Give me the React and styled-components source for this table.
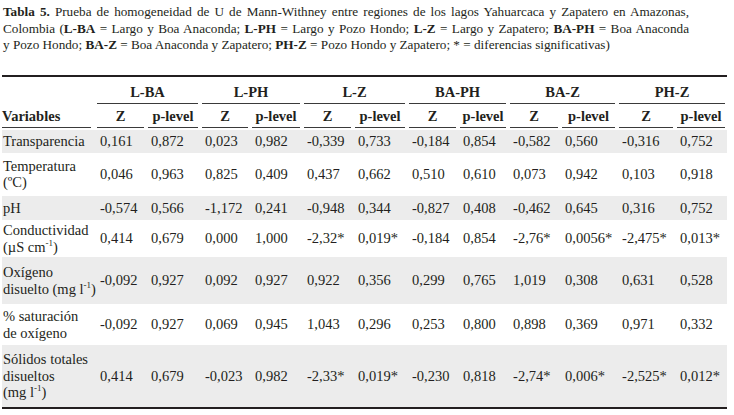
import React from "react"
import styled, { createGlobalStyle } from "styled-components"

const GlobalStyle = createGlobalStyle`
  html, body {
    margin: 0;
    padding: 0;
    background: #ffffff;
  }
  body {
    font-family: "Liberation Serif", "Times New Roman", serif;
    color: #231f20;
  }
`

const Page = styled.div`
  width: 734px;
  height: 415px;
  padding: 4px 5px 0 2px;
  box-sizing: border-box;
  overflow: hidden;
`

const Caption = styled.div`
  width: 686px;
  margin-left: 1px;
  font-size: 13.2px;
  line-height: 16.5px;
  b {
    font-weight: 700;
  }
`

const CaptionLine = styled.span`
  display: block;
  white-space: nowrap;
  text-align: left;
  text-align-last: ${(p) => (p.$justify ? "justify" : "left")};
  ${(p) => p.$justify && "white-space: normal;"}
`

const Table = styled.table`
  margin-top: 21px;
  width: 725px;
  table-layout: fixed;
  border-collapse: collapse;
  border-top: 2px solid #231f20;
  border-bottom: 2px solid #231f20;
  font-family: "Liberation Serif", "Times New Roman", serif;
  font-size: 14.5px;
  line-height: 16.5px;
  color: #231f20;
`

const Group = styled.th`
  padding: 7px 2px 0;
  height: 27px;
  box-sizing: border-box;
  font-weight: 700;
  text-align: center;
  vertical-align: top;
`

const Rule = styled.div`
  border-bottom: 1px solid #3a3a3a;
  padding-bottom: 3px;
`

const Head = styled.th`
  padding: 0 ${(p) => (p.$left ? 4 : 2)}px 2px ${(p) => (p.$left ? 0 : 2)}px;
  height: 26px;
  box-sizing: border-box;
  font-weight: 700;
  text-align: ${(p) => (p.$left ? "left" : "center")};
  vertical-align: bottom;
`

const Row = styled.tr`
  background: ${(p) => (p.$shade ? "#ececec" : "#ffffff")};
`

const Cell = styled.td`
  padding: ${(p) => p.$pad}px 0 ${(p) => p.$pad}px 5px;
  text-align: left;
  vertical-align: middle;
  white-space: nowrap;
`

const Label = styled.td`
  padding: ${(p) => p.$pad}px 1px ${(p) => p.$pad}px 1px;
  text-align: left;
  vertical-align: middle;
  white-space: nowrap;
  sup {
    font-size: 9px;
    line-height: 0;
  }
`

const widths = [93, 51, 54, 50, 52, 51, 54, 51, 50, 52, 57, 58, 52]
const groups = ["L-BA", "L-PH", "L-Z", "BA-PH", "BA-Z", "PH-Z"]

const rows = [
  {
    label: <>Transparencia</>,
    pad: 3,
    values: ["0,161", "0,872", "0,023", "0,982", "-0,339", "0,733", "-0,184", "0,854", "-0,582", "0,560", "-0,316", "0,752"],
  },
  {
    label: <>Temperatura<br />(ºC)</>,
    pad: 5,
    values: ["0,046", "0,963", "0,825", "0,409", "0,437", "0,662", "0,510", "0,610", "0,073", "0,942", "0,103", "0,918"],
  },
  {
    label: <>pH</>,
    pad: 4,
    values: ["-0,574", "0,566", "-1,172", "0,241", "-0,948", "0,344", "-0,827", "0,408", "-0,462", "0,645", "0,316", "0,752"],
  },
  {
    label: <>Conductividad<br />(µS cm<sup>-1</sup>)</>,
    pad: 2,
    values: ["0,414", "0,679", "0,000", "1,000", "-2,32*", "0,019*", "-0,184", "0,854", "-2,76*", "0,0056*", "-2,475*", "0,013*"],
  },
  {
    label: <>Oxígeno<br />disuelto (mg l<sup>-1</sup>)</>,
    pad: 7,
    values: ["-0,092", "0,927", "0,092", "0,927", "0,922", "0,356", "0,299", "0,765", "1,019", "0,308", "0,631", "0,528"],
  },
  {
    label: <>% saturación<br />de oxígeno</>,
    pad: 4,
    values: ["-0,092", "0,927", "0,069", "0,945", "1,043", "0,296", "0,253", "0,800", "0,898", "0,369", "0,971", "0,332"],
  },
  {
    label: <>Sólidos totales<br />disueltos<br />(mg l<sup>-1</sup>)</>,
    pad: 6,
    values: ["0,414", "0,679", "-0,023", "0,982", "-2,33*", "0,019*", "-0,230", "0,818", "-2,74*", "0,006*", "-2,525*", "0,012*"],
  },
]

const App = () => {
  return (
    <Page>
      <GlobalStyle />
      <Caption>
        <CaptionLine $justify>
          <b>Tabla 5.</b> Prueba de homogeneidad de U de Mann-Withney entre regiones de los lagos Yahuarcaca y Zapatero en Amazonas,
        </CaptionLine>
        <CaptionLine $justify>
          Colombia (<b>L-BA</b> = Largo y Boa Anaconda; <b>L-PH</b> = Largo y Pozo Hondo; <b>L-Z</b> = Largo y Zapatero; <b>BA-PH</b> = Boa Anaconda
        </CaptionLine>
        <CaptionLine>
          y Pozo Hondo; <b>BA-Z</b> = Boa Anaconda y Zapatero; <b>PH-Z</b> = Pozo Hondo y Zapatero; * = diferencias significativas)
        </CaptionLine>
      </Caption>
      <Table>
        <colgroup>
          {widths.map((w, i) => (
            <col key={i} style={{ width: w }} />
          ))}
        </colgroup>
        <thead>
          <tr>
            <th />
            {groups.map((g) => (
              <Group key={g} colSpan={2}>
                <Rule>{g}</Rule>
              </Group>
            ))}
          </tr>
          <tr>
            <Head $left>
              <Rule>Variables</Rule>
            </Head>
            {groups.map((g) => (
              <React.Fragment key={g}>
                <Head>
                  <Rule>Z</Rule>
                </Head>
                <Head>
                  <Rule>p-level</Rule>
                </Head>
              </React.Fragment>
            ))}
          </tr>
        </thead>
        <tbody>
          {rows.map((r, i) => (
            <Row key={i} $shade={i % 2 === 0}>
              <Label $pad={r.pad}>{r.label}</Label>
              {r.values.map((v, j) => (
                <Cell key={j} $pad={r.pad}>
                  {v}
                </Cell>
              ))}
            </Row>
          ))}
        </tbody>
      </Table>
    </Page>
  )
}

export default App
